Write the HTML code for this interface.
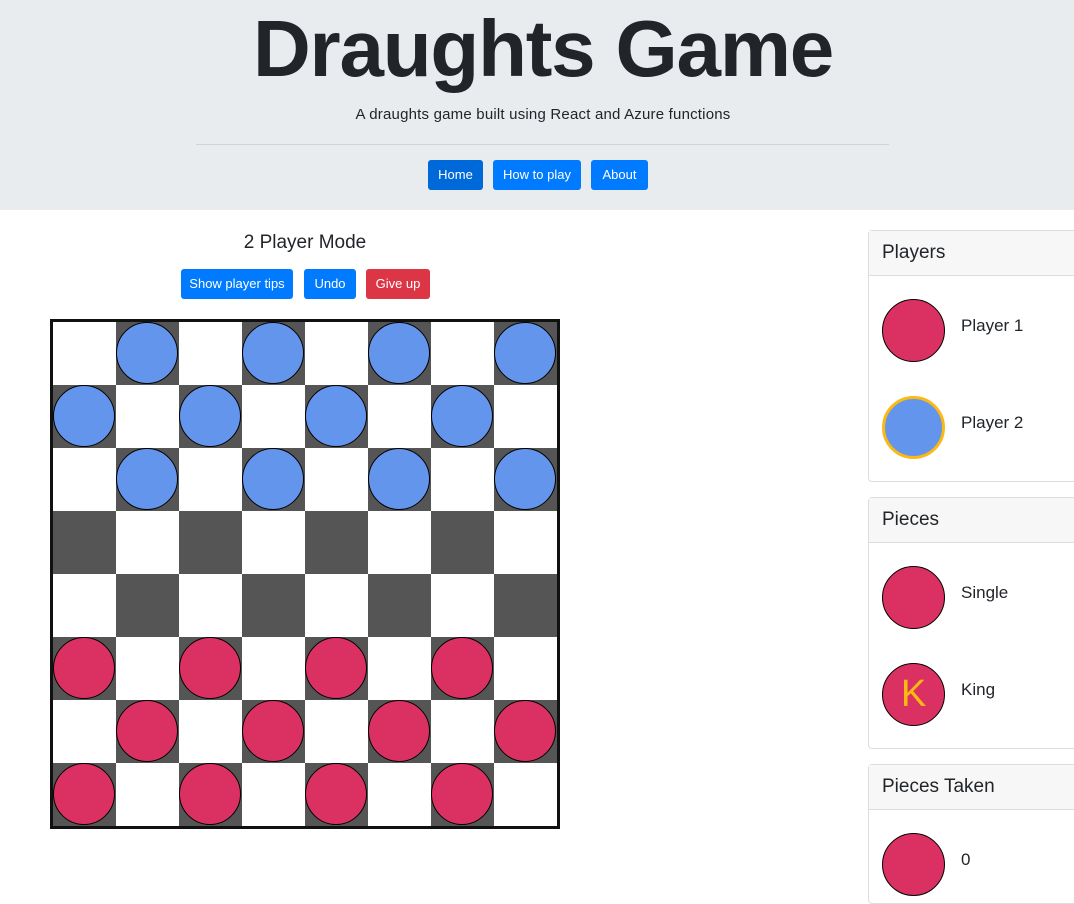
<!DOCTYPE html>
<html><head><meta charset="utf-8"><style>
*{box-sizing:border-box;margin:0;padding:0}
body{width:1074px;height:867px;overflow:hidden;background:#fff;font-family:"Liberation Sans",sans-serif;color:#212529;position:relative}
.hdr{position:absolute;left:0;top:0;width:1074px;height:210px;background:#e9ecef}
h1{position:absolute;left:0;width:1086px;top:-1px;text-align:center;font-size:80px;font-weight:bold;letter-spacing:-1.2px;line-height:100px}
.sub{position:absolute;left:0;width:1086px;top:106px;text-align:center;font-size:15px;letter-spacing:0.2px}
.hr{position:absolute;left:196px;width:693px;top:144px;border-top:1px solid #d0d4d8}
.btn{position:absolute;height:30px;line-height:30px;color:#fff;background:#007bff;border-radius:3px;font-size:13px;text-align:center}
.t2{position:absolute;left:0;width:610px;top:232px;text-align:center;font-size:19px}
.board{position:absolute;left:50px;top:319px;width:510px;height:510px;border:3px solid #111;display:grid;grid-template-columns:repeat(8,63px);grid-template-rows:repeat(8,63px)}
.board div{position:relative}
.w{background:#fff}.d,.b,.r{background:#555}
.b::after,.r::after{content:"";position:absolute;left:0;top:0;width:62px;height:62px;border-radius:50%;border:1px solid #000;box-sizing:border-box}
.b::after{background:#6495ed}.r::after{background:#db3162}
.card{position:absolute;left:868px;width:220px;border:1px solid #ddd;border-radius:4px}
.ch{height:45px;line-height:44px;background:#f7f7f7;border-bottom:1px solid #ddd;padding-left:13px;font-size:19px}
.pc{position:absolute;left:13px;width:63px;height:63px;border-radius:50%;border:1px solid #000;background:#db3162}
.lb{position:absolute;left:92px;font-size:17px}
</style></head><body>
<div class="hdr">
<h1>Draughts Game</h1>
<div class="sub">A draughts game built using React and Azure functions</div>
<div class="hr"></div>
<div class="btn" style="left:428px;width:55px;top:160px;background:#0069d9">Home</div>
<div class="btn" style="left:493px;width:88px;top:160px">How to play</div>
<div class="btn" style="left:591px;width:57px;top:160px">About</div>
</div>
<div class="t2">2 Player Mode</div>
<div class="btn" style="left:181px;width:112px;top:269px">Show player tips</div>
<div class="btn" style="left:304px;width:52px;top:269px">Undo</div>
<div class="btn" style="left:366px;width:64px;top:269px;background:#dc3545">Give up</div>
<div class="board">
<div class="w"></div><div class="b"></div><div class="w"></div><div class="b"></div><div class="w"></div><div class="b"></div><div class="w"></div><div class="b"></div>
<div class="b"></div><div class="w"></div><div class="b"></div><div class="w"></div><div class="b"></div><div class="w"></div><div class="b"></div><div class="w"></div>
<div class="w"></div><div class="b"></div><div class="w"></div><div class="b"></div><div class="w"></div><div class="b"></div><div class="w"></div><div class="b"></div>
<div class="d"></div><div class="w"></div><div class="d"></div><div class="w"></div><div class="d"></div><div class="w"></div><div class="d"></div><div class="w"></div>
<div class="w"></div><div class="d"></div><div class="w"></div><div class="d"></div><div class="w"></div><div class="d"></div><div class="w"></div><div class="d"></div>
<div class="r"></div><div class="w"></div><div class="r"></div><div class="w"></div><div class="r"></div><div class="w"></div><div class="r"></div><div class="w"></div>
<div class="w"></div><div class="r"></div><div class="w"></div><div class="r"></div><div class="w"></div><div class="r"></div><div class="w"></div><div class="r"></div>
<div class="r"></div><div class="w"></div><div class="r"></div><div class="w"></div><div class="r"></div><div class="w"></div><div class="r"></div><div class="w"></div>
</div>
<div class="card" style="top:230px;height:252px"><div class="ch">Players</div>
<div class="pc" style="top:68px"></div><div class="lb" style="top:85px">Player 1</div>
<div class="pc" style="top:165px;border:3px solid #fdb913;background:#6495ed"></div><div class="lb" style="top:182px">Player 2</div>
</div>
<div class="card" style="top:497px;height:252px"><div class="ch">Pieces</div>
<div class="pc" style="top:68px"></div><div class="lb" style="top:85px">Single</div>
<div class="pc" style="top:165px;color:#fdb913;font-size:38px;text-align:center;line-height:60px">K</div><div class="lb" style="top:182px">King</div>
</div>
<div class="card" style="top:764px;height:140px"><div class="ch">Pieces Taken</div>
<div class="pc" style="top:68px"></div><div class="lb" style="top:85px">0</div>
</div>
</body></html>
